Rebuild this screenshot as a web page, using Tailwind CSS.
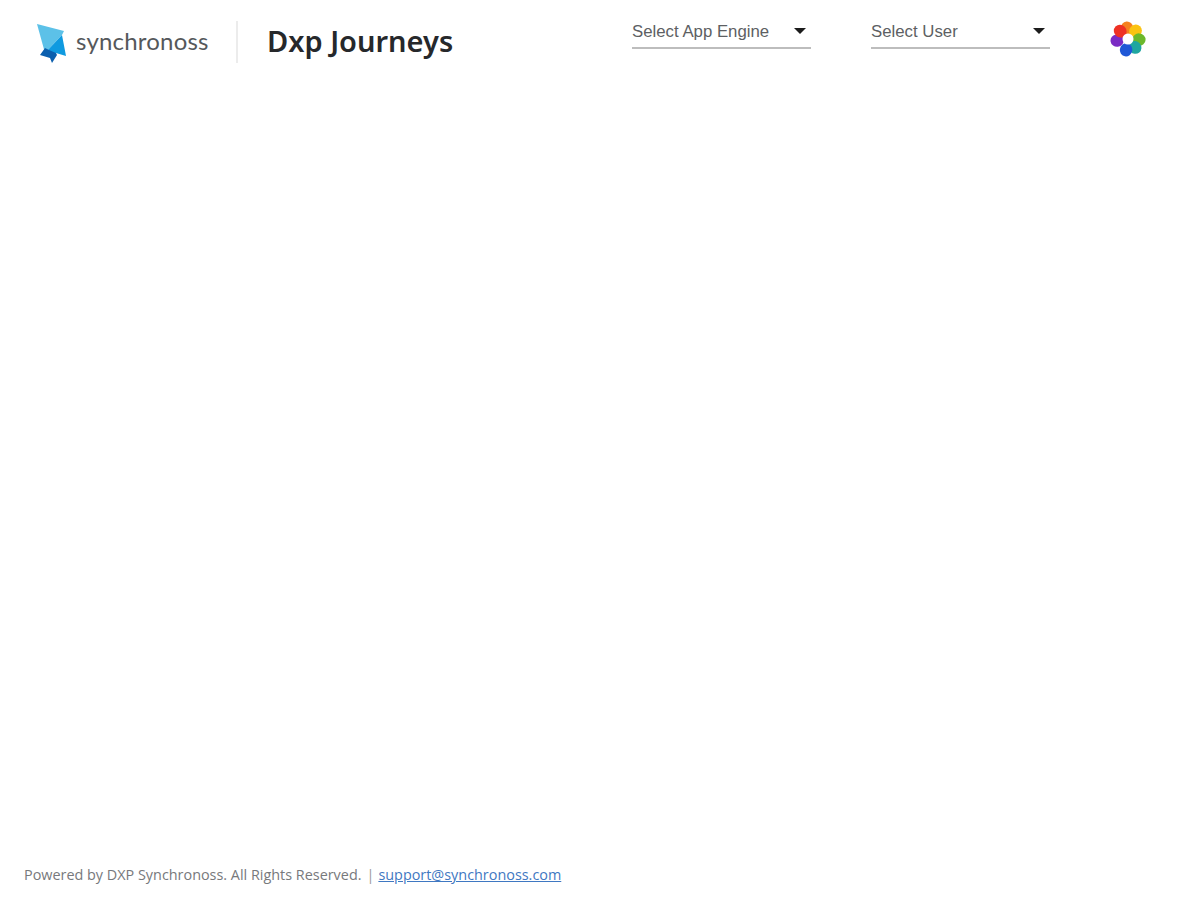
<!DOCTYPE html>
<html lang="en">
<head>
  <meta charset="UTF-8">
  <meta name="viewport" content="width=device-width, initial-scale=1.0">
  <title>Dxp Journeys</title>
  <script src="https://cdn.jsdelivr.net/npm/@tailwindcss/browser@4"></script>
</head>
<body class="bg-white h-[900px] overflow-hidden flex flex-col font-['Open_Sans',sans-serif]">
  <!-- Header -->
  <header class="h-[84px] flex items-start shrink-0">
    <div class="flex items-center ml-[37px] mt-[22px] w-[198px] h-[41px]">
      <svg width="30" height="41" viewBox="0 0 30 41" class="shrink-0">
        <polygon points="0,2 27,9 25,13 8,31" fill="#5cc1e8"/>
        <polygon points="25,13 29,34 19,31 13,33 8,31" fill="#0f9ae0"/>
        <polygon points="8,26 12,28 19,31 20,33 15,41 13,36 3,33" fill="#0b5fae"/>
      </svg>
      <span class="ml-[9px] mb-[4px] text-[24px] leading-none text-[#55585b] font-['Lato',sans-serif] tracking-[0.2px]">synchronoss</span>
    </div>
    <div class="w-[2px] h-[42px] mt-[21px] bg-[#ececec] ml-[1px]"></div>
    <h1 class="ml-[29px] mt-[19px] text-[29px] leading-[44px] font-semibold text-[#26282b] font-['Noto_Sans',sans-serif]">Dxp Journeys</h1>

    <div class="ml-auto flex items-start">
      <div class="w-[179px] h-[28px] mt-[21px] border-b-2 border-[#bdbdbd] flex items-start justify-between pr-[5px]">
        <span class="text-[16.8px] leading-[20px] mt-[1px] text-[#5d5f63] font-['Liberation_Sans',sans-serif]">Select App Engine</span>
        <span class="mt-[7px] w-0 h-0 border-x-[6px] border-x-transparent border-t-[6px] border-t-[#1c1c1c]"></span>
      </div>
      <div class="ml-[60px] w-[179px] h-[28px] mt-[21px] border-b-2 border-[#bdbdbd] flex items-start justify-between pr-[5px]">
        <span class="text-[16.8px] leading-[20px] mt-[1px] text-[#5d5f63] font-['Liberation_Sans',sans-serif]">Select User</span>
        <span class="mt-[7px] w-0 h-0 border-x-[6px] border-x-transparent border-t-[6px] border-t-[#1c1c1c]"></span>
      </div>
      <svg width="36" height="36" viewBox="-18 -18 36 36" class="ml-[60px] mr-[54px] mt-[21px]">
        <ellipse cx="0" cy="-11" rx="6.2" ry="6.6" fill="#f5811f" transform="rotate(-5)"/>
        <ellipse cx="0" cy="-11" rx="6.2" ry="6.6" fill="#fbc311" transform="rotate(43)"/>
        <ellipse cx="0" cy="-11" rx="6.2" ry="6.6" fill="#6cb82c" transform="rotate(93)"/>
        <ellipse cx="0" cy="-11" rx="6.2" ry="6.6" fill="#1fa6a0" transform="rotate(140)"/>
        <ellipse cx="0" cy="-11" rx="6.2" ry="6.6" fill="#1f57d6" transform="rotate(190)"/>
        <ellipse cx="0" cy="-11" rx="6.2" ry="6.6" fill="#7a2bc4" transform="rotate(262)"/>
        <ellipse cx="0" cy="-11" rx="6.2" ry="6.6" fill="#ee3124" transform="rotate(315)"/>
        <circle cx="0" cy="0" r="5.5" fill="#ffffff"/>
      </svg>
    </div>
  </header>

  <main class="flex-1"></main>

  <!-- Footer -->
  <footer class="h-[50px] pl-[24px] pt-[15px] shrink-0 text-[14.4px] leading-[20px] text-[#77797c] flex items-start">
    <span>Powered by DXP Synchronoss. All Rights Reserved.</span>
    <span class="ml-[5px] mr-[4px] text-[#9a9a9a]">|</span>
    <a href="#" class="text-[#3f78c2] underline">support@synchronoss.com</a>
  </footer>
</body>
</html>
